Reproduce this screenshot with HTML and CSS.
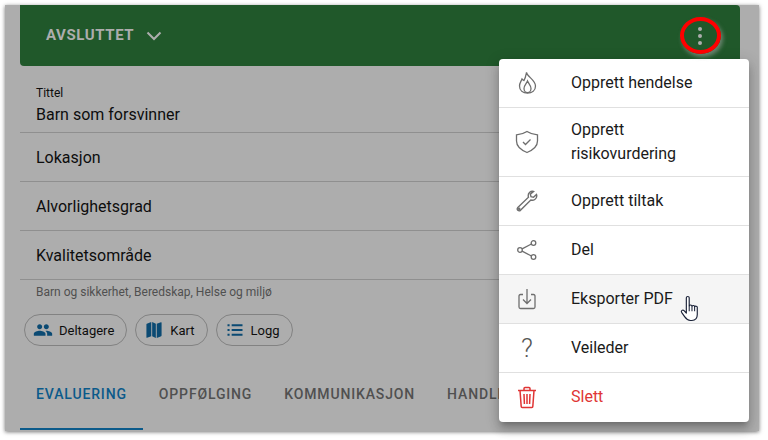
FILE: index.html
```html
<!DOCTYPE html>
<html lang="en">

<head>
    <meta charset="UTF-8">
    <title>Hendelse</title>
    <link rel="stylesheet" href="styles.css">
</head>

<body>
    <div class="screen">
        <div class="status-bar">
            <div class="status">
                <span>AVSLUTTET</span>
                <svg class="chevron" width="16" height="10" viewBox="0 0 16 10"><path d="M1.500 1.500 8 8l6.500-6.500" fill="none" stroke="currentColor" stroke-width="2"/></svg>
            </div>
            <button class="more">
                <span class="dot"></span>
                <span class="dot"></span>
                <span class="dot"></span>
            </button>
        </div>

        <div class="field field-title">
            <label class="field-label">Tittel</label>
            <div class="field-value">Barn som forsvinner</div>
        </div>
        <div class="field"><div class="field-value">Lokasjon</div></div>
        <div class="field"><div class="field-value">Alvorlighetsgrad</div></div>
        <div class="field"><div class="field-value">Kvalitetsområde</div></div>
        <p class="hint">Barn og sikkerhet, Beredskap, Helse og miljø</p>

        <div class="chips">
            <div class="chip">
                <svg width="20" height="20" viewBox="0 0 24 24"><path fill="#0b4a73" d="M16 11c1.660 0 3-1.340 3-3s-1.340-3-3-3-3 1.340-3 3 1.340 3 3 3zm-8 0c1.660 0 3-1.340 3-3S9.660 5 8 5 5 6.340 5 8s1.340 3 3 3zm0 2c-2.330 0-7 1.170-7 3.500V19h14v-2.500C15 14.170 10.330 13 8 13zm8 0c-.290 0-.620.020-.970.050 1.160.840 1.970 1.970 1.970 3.450V19h6v-2.500c0-2.330-4.670-3.500-7-3.500z"/></svg>
                <span>Deltagere</span>
            </div>
            <div class="chip">
                <svg width="20" height="20" viewBox="0 0 24 24"><path fill="#0b4a73" d="M8.700 2.500 3.400 4.600c-.300.120-.500.400-.500.700v15.600c0 .400.400.650.750.500L8.700 19.500zM9.800 2.500v17l4.400 2v-17zM15.300 4.500v17l5.300-2.100c.300-.120.500-.400.500-.700V3.100c0-.400-.400-.650-.750-.500z"/></svg>
                <span>Kart</span>
            </div>
            <div class="chip">
                <svg width="20" height="20" viewBox="0 0 24 24"><path fill="#0b4a73" d="M3 5h2.500v2.500H3zM8 5h13v2.500H8zM3 10.750h2.500v2.500H3zM8 10.750h13v2.500H8zM3 16.500h2.500V19H3zM8 16.500h13V19H8z"/></svg>
                <span>Logg</span>
            </div>
        </div>

        <div class="tabs">
            <div class="tab tab-active">Evaluering</div>
            <div class="tab">Oppfølging</div>
            <div class="tab">Kommunikasjon</div>
            <div class="tab">Handlinger</div>
        </div>
    </div>

    <ul class="menu">
        <li class="menu-item">
            <svg class="menu-icon" width="24" height="24" viewBox="0 0 24 24" fill="none" stroke="#6e6e6e" stroke-width="1.300"><path d="M11.500 1.500C12.500 6 20.500 9 20.500 15c0 4.500-3.500 7-8 7s-8-2.500-8-7c0-3 1.500-4.500 2.500-7 1 1 1.500 1.500 2 1.500 1.500-2.500 2-5.500 2.500-8z"/><path d="M12.500 10c1 2.500 3.500 4.500 3.500 7.500 0 2.300-1.500 4.200-3.500 4.200S9 19.800 9 17.500c0-3 2.500-5 3.500-7.500z"/></svg>
            <span>Opprett hendelse</span>
        </li>
        <li class="menu-item">
            <svg class="menu-icon" width="24" height="24" viewBox="0 0 24 24" fill="none" stroke="#6e6e6e" stroke-width="1.300"><path d="M12 1.500c3 2 7 3 10.500 3.300V11c0 5.500-4.500 9-10.500 11.500C6 20 1.500 16.500 1.500 11V4.800C5 4.500 9 3.500 12 1.500z"/><path d="m8 12 2.500 2.500 5-5"/></svg>
            <span>Opprett risikovurdering</span>
        </li>
        <li class="menu-item">
            <svg class="menu-icon" width="24" height="24" viewBox="0 0 24 24" fill="none" stroke="#6e6e6e" stroke-width="1.400"><path d="M18.500 2.500c-2.800-.800-5.500 1.500-5.300 4.300.030.500.100 1 .300 1.400L2.800 18.600c-.800.800-.800 2 0 2.700.800.800 2 .800 2.700 0L15.800 11c2.800 1 5.900-1 6-4 0-.600-.100-1.100-.300-1.600L18.500 8.300l-2.500-.700-.700-2.500z"/><circle cx="4.200" cy="19.900" r=".6"/></svg>
            <span>Opprett tiltak</span>
        </li>
        <li class="menu-item">
            <svg class="menu-icon" width="24" height="24" viewBox="0 0 24 24" fill="none" stroke="#6e6e6e" stroke-width="1.300"><circle cx="18.500" cy="5" r="2.300"/><circle cx="5" cy="12" r="2.300"/><circle cx="18.500" cy="19" r="2.300"/><path d="M7.100 10.900 16.400 6M7.100 13.100l9.300 4.900"/></svg>
            <span>Del</span>
        </li>
        <li class="menu-item menu-item-hover">
            <svg class="menu-icon" width="24" height="24" viewBox="0 0 24 24" fill="none" stroke="#6e6e6e" stroke-width="1.300"><path d="M8 7.500H5.500c-1 0-1.500.500-1.500 1.500v11c0 1 .500 1.500 1.500 1.500h13c1 0 1.500-.500 1.500-1.500V9c0-1-.500-1.500-1.500-1.500H16"/><path d="M12 2v14M8 12.500l4 4 4-4"/></svg>
            <span>Eksporter PDF</span>
        </li>
        <li class="menu-item">
            <span class="menu-icon question">?</span>
            <span>Veileder</span>
        </li>
        <li class="menu-item menu-item-danger">
            <svg class="menu-icon" width="24" height="24" viewBox="0 0 24 24" fill="none" stroke="#e03535" stroke-width="1.500"><path d="M3 5.500h18M9 5.500V3.500c0-.600.400-1 1-1h4c.600 0 1 .400 1 1v2M5 5.500l1.200 16c0 .600.400 1 1 1h9.600c.600 0 1-.400 1-1l1.200-16M9 9l.400 10M12 9v10M15 9l-.400 10"/></svg>
            <span>Slett</span>
        </li>
    </ul>

    <!-- red marker round the menu button -->
    <span class="marker"></span>

    <svg class="cursor" width="19" height="26" viewBox="0 0 16.500 24" preserveAspectRatio="none"><path fill="#fff" stroke="#1a2238" stroke-width="1" stroke-linejoin="round" d="M5.500 2.500c0-1.500 2.500-1.500 2.500 0V10c.500-1 2.200-1 2.400.300.400-.900 2.200-.800 2.300.400.600-.800 2.300-.500 2.300.700v6.600c0 3-1.500 5.500-4.700 5.500H9c-2.500 0-3.700-1.500-5-3.500L1.400 16c-.900-1.500 1-2.700 2.100-1.500l2 2.200z"/><path fill="none" stroke="#1a2238" stroke-width=".9" d="M8 10v5M10.400 10.300V15M12.700 10.700V15"/></svg>
</body>

</html>
```

FILE: styles.css
```css
* {
    box-sizing: border-box;
}

body {
    margin: 0;
    width: 768px;
    height: 440px;
    overflow: hidden;
    background-color: #fff;
    font-family: Roboto, sans-serif;
    position: relative;
}

.screen {
    margin: 5px 0 0 5px;
    width: 754px;
    height: 426px;
    padding: 0 19px 0 15px;
    background-color: #adadad;
    box-shadow: 0 1px 4px rgba(0, 0, 0, 0.55);
    overflow: hidden;
}

.status-bar {
    height: 61px;
    padding: 0 24px 0 26px;
    display: flex;
    align-items: center;
    justify-content: space-between;
    background-color: #20582a;
    border-radius: 0 0 4px 4px;
    border-top-right-radius: 4px;
}

.status {
    display: flex;
    align-items: center;
    gap: 12px;
    margin-top: -2px;
    color: #adadad;
    font-size: 15px;
    font-weight: 700;
    letter-spacing: 0.6px;
}

.chevron {
    margin-top: 2px;
}

.more {
    width: 32px;
    height: 32px;
    padding: 0;
    border: none;
    background: none;
    display: flex;
    flex-direction: column;
    align-items: center;
    justify-content: center;
    gap: 3px;
}

.dot {
    width: 4px;
    height: 4px;
    border-radius: 50%;
    background-color: #adadad;
}

.field {
    height: 49px;
    padding: 1px 16px 0;
    display: flex;
    flex-direction: column;
    justify-content: center;
    border-bottom: 1px solid #8f8f8f;
}

.field-title {
    height: 67px;
    padding-top: 20px;
    justify-content: flex-start;
}

.field-label {
    font-size: 12px;
    line-height: 14px;
    color: #0d0d0d;
}

.field-value {
    font-size: 16px;
    line-height: 20px;
    color: #0d0d0d;
}

.field-title .field-value {
    margin-top: 5px;
}

.hint {
    margin: 5px 0 0;
    padding: 0 16px;
    font-size: 12px;
    line-height: 14px;
    color: #505050;
}

.chips {
    margin: 15px 0 0 4px;
    display: flex;
    gap: 8px;
}

.chip {
    height: 32px;
    padding: 0 12px 0 8px;
    display: flex;
    align-items: center;
    gap: 6px;
    border: 1px solid #828282;
    border-radius: 16px;
    font-size: 13px;
    color: #0d0d0d;
}

.tabs {
    margin-top: 12px;
    display: flex;
}

.tab {
    height: 72px;
    padding: 0 16px;
    display: flex;
    align-items: center;
    font-size: 14px;
    font-weight: 500;
    letter-spacing: 0.85px;
    text-transform: uppercase;
    white-space: nowrap;
    color: #505050;
}

.tab-active {
    color: #0b5a8a;
    box-shadow: inset 0 -2px 0 #0b5a8a;
}

.menu {
    position: absolute;
    left: 499px;
    top: 59px;
    width: 250px;
    margin: 0;
    padding: 0 0 1px;
    list-style: none;
    background-color: #fff;
    border-radius: 4px;
    box-shadow: 0 5px 5px -3px rgba(0, 0, 0, 0.2), 0 8px 10px 1px rgba(0, 0, 0, 0.14), 0 3px 14px 2px rgba(0, 0, 0, 0.12);
}

.menu-item {
    min-height: 49px;
    padding: 10px 16px;
    display: flex;
    align-items: center;
    gap: 32px;
    border-bottom: 1px solid #e0e0e0;
    font-size: 16px;
    line-height: 24px;
    color: #1a1a1a;
}

.menu-item:last-child {
    min-height: 48px;
    border-bottom: none;
}

.menu-item-hover {
    background-color: #f5f5f5;
}

.menu-item-danger {
    color: #e03535;
}

.menu-icon {
    flex: none;
    width: 24px;
    height: 24px;
}

.question {
    font-size: 26px;
    line-height: 24px;
    text-align: center;
    font-weight: 300;
    color: #555;
}

.marker {
    position: absolute;
    left: 680px;
    top: 17px;
    width: 41px;
    height: 37px;
    border: 4px solid #ff0000;
    border-radius: 50%;
    box-shadow: 2px 3px 4px rgba(170, 170, 170, 0.55);
}

.cursor {
    position: absolute;
    left: 680px;
    top: 295px;
}
```
